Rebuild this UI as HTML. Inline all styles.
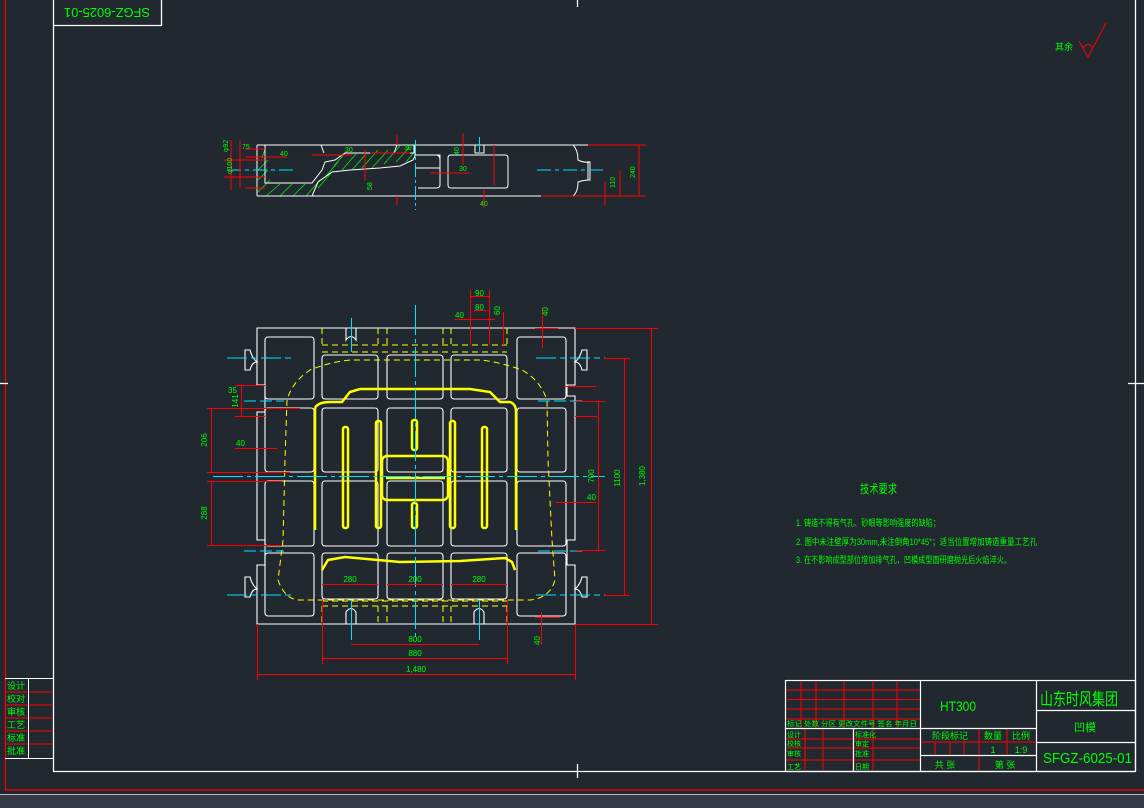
<!DOCTYPE html>
<html><head><meta charset="utf-8"><style>
html,body{margin:0;padding:0;background:#212830;width:1144px;height:808px;overflow:hidden}
svg{display:block}
text{font-family:"Liberation Sans","Noto Sans CJK SC",sans-serif;fill:#00ff00}
</style></head><body>
<svg width="1144" height="808" viewBox="0 0 1144 808" xmlns="http://www.w3.org/2000/svg">
<rect width="1144" height="808" fill="#212830"/>
<rect x="0" y="794" width="1144" height="14" fill="#353a46"/>
<line x1="0" y1="794.5" x2="1144" y2="794.5" stroke="#b8bcc4" stroke-width="1"/>
<line x1="5" y1="790" x2="1144" y2="790" stroke="#ff0000" stroke-width="1.2"/>
<line x1="5.5" y1="0" x2="5.5" y2="790" stroke="#ff0000" stroke-width="1.2"/>
<g stroke="#fff" stroke-width="1.3" fill="none">
<line x1="53.5" y1="0" x2="53.5" y2="771"/>
<line x1="53" y1="771.5" x2="1135" y2="771.5"/>
<line x1="1135.5" y1="0" x2="1135.5" y2="771"/>
<polyline points="53.5,25.5 161.5,25.5 161.5,0"/>
<line x1="577.5" y1="0" x2="577.5" y2="7"/>
<line x1="0" y1="383.5" x2="8" y2="383.5"/>
<line x1="1128" y1="383.5" x2="1144" y2="383.5"/>
<line x1="577.5" y1="764" x2="577.5" y2="778"/>
</g>
<text x="107" y="16" font-size="13" text-anchor="middle" textLength="86" lengthAdjust="spacingAndGlyphs" transform="rotate(180 107 12)">SFGZ-6025-01</text>
<text x="1055" y="50" font-size="9">其余</text>
<path d="M1079,41 L1088,57 L1106,23 M1083,48 Q1088,41 1093,48" stroke="#ff0000" stroke-width="1" fill="none"/>
<g stroke="#ff0000" stroke-width="1" fill="none">
<line x1="5" y1="692" x2="53" y2="692"/><line x1="5" y1="705" x2="53" y2="705"/>
<line x1="5" y1="718" x2="53" y2="718"/><line x1="5" y1="731" x2="53" y2="731"/>
<line x1="5" y1="744" x2="53" y2="744"/>
</g>
<g stroke="#fff" stroke-width="1" fill="none">
<line x1="5" y1="678.5" x2="53" y2="678.5"/><line x1="5" y1="758.5" x2="53" y2="758.5"/>
<line x1="28.5" y1="678" x2="28.5" y2="758"/>
</g>
<g font-size="9"><text x="7" y="689">设计</text><text x="7" y="702">校对</text><text x="7" y="715">审核</text><text x="7" y="728">工艺</text><text x="7" y="741">标准</text><text x="7" y="754">批准</text></g>
<g stroke="#ff0000" stroke-width="1" fill="none">
<line x1="786" y1="690" x2="920" y2="690"/><line x1="786" y1="699.5" x2="920" y2="699.5"/>
<line x1="786" y1="709" x2="920" y2="709"/><line x1="786" y1="719" x2="920" y2="719"/>
<line x1="801" y1="680" x2="801" y2="728"/><line x1="816" y1="680" x2="816" y2="728"/>
<line x1="844" y1="680" x2="844" y2="728"/><line x1="873" y1="680" x2="873" y2="728"/>
<line x1="897" y1="680" x2="897" y2="728"/>
<line x1="786" y1="739" x2="920" y2="739"/><line x1="786" y1="748" x2="920" y2="748"/>
<line x1="786" y1="760" x2="920" y2="760"/>
<line x1="805" y1="728" x2="805" y2="771"/><line x1="823" y1="728" x2="823" y2="771"/>
<line x1="853" y1="728" x2="853" y2="771"/><line x1="873" y1="728" x2="873" y2="771"/>
<line x1="920" y1="742" x2="1036" y2="742"/>
<line x1="979" y1="728" x2="979" y2="771"/><line x1="1007" y1="728" x2="1007" y2="755"/>
<line x1="935" y1="742" x2="935" y2="755"/><line x1="950" y1="742" x2="950" y2="755"/><line x1="964" y1="742" x2="964" y2="755"/>
</g>
<g stroke="#fff" stroke-width="1.2" fill="none">
<rect x="785.5" y="680.5" width="350" height="91"/>
<line x1="785" y1="728.5" x2="1036" y2="728.5"/>
<line x1="853.5" y1="728" x2="853.5" y2="771"/>
<line x1="920.5" y1="680" x2="920.5" y2="771"/>
<line x1="1036.5" y1="680" x2="1036.5" y2="771"/>
<line x1="920" y1="755.5" x2="1036" y2="755.5"/>
<line x1="1036" y1="710.5" x2="1135" y2="710.5"/>
<line x1="1036" y1="742.5" x2="1135" y2="742.5"/>
</g>
<g font-size="7"><text x="787" y="726" textLength="130" lengthAdjust="spacingAndGlyphs">标记 处数 分区 更改文件号 签名 年月日</text>
<text x="787" y="737">设计</text><text x="787" y="746">校核</text><text x="787" y="756">审核</text><text x="787" y="769">工艺</text>
<text x="855" y="737">标准化</text><text x="855" y="746">审定</text><text x="855" y="756">批准</text><text x="855" y="769">日期</text></g>
<text x="940" y="711" font-size="14" textLength="36" lengthAdjust="spacingAndGlyphs">HT300</text>
<text x="1040" y="705" font-size="17" textLength="78" lengthAdjust="spacingAndGlyphs">山东时风集团</text>
<text x="1085" y="731" font-size="11" text-anchor="middle">凹模</text>
<g font-size="9"><text x="950" y="739" text-anchor="middle">阶段标记</text><text x="993" y="739" text-anchor="middle">数量</text><text x="1021" y="739" text-anchor="middle">比例</text>
<text x="993" y="753" text-anchor="middle">1</text><text x="1021" y="753" text-anchor="middle">1:9</text>
<text x="945" y="768" text-anchor="middle">共 张</text><text x="1005" y="768" text-anchor="middle">第 张</text></g>
<text x="1043" y="763" font-size="15" textLength="89" lengthAdjust="spacingAndGlyphs">SFGZ-6025-01</text>
<text x="860" y="493" font-size="12" textLength="37" lengthAdjust="spacingAndGlyphs">技术要求</text>
<g font-size="9"><text x="796" y="526" textLength="144" lengthAdjust="spacingAndGlyphs">1. 铸造不得有气孔、砂眼等影响强度的缺陷；</text>
<text x="796" y="545" textLength="241" lengthAdjust="spacingAndGlyphs">2. 图中未注壁厚为30mm,未注倒角10*45°；适当位置增加铸造重量工艺孔</text>
<text x="796" y="563" textLength="215" lengthAdjust="spacingAndGlyphs">3. 在不影响成型部位增加排气孔，凹模成型面研磨抛光后火焰淬火。</text></g>

<g>
<g stroke="#00ee00" stroke-width="0.8">
<line x1="258" y1="170" x2="268" y2="160"/><line x1="258" y1="180" x2="268" y2="170"/><line x1="258" y1="192" x2="270" y2="180"/>
<line x1="266" y1="196" x2="280" y2="184"/><line x1="280" y1="196" x2="292" y2="184"/><line x1="293" y1="196" x2="305" y2="184"/>
<line x1="306" y1="196" x2="320" y2="180"/><line x1="318" y1="188" x2="332" y2="172"/><line x1="326" y1="176" x2="338" y2="162"/>
<line x1="334" y1="166" x2="346" y2="152"/><line x1="342" y1="170" x2="356" y2="154"/><line x1="352" y1="170" x2="366" y2="154"/>
<line x1="362" y1="168" x2="378" y2="150"/><line x1="372" y1="168" x2="388" y2="150"/><line x1="384" y1="164" x2="400" y2="146"/>
<line x1="396" y1="162" x2="410" y2="147"/><line x1="406" y1="162" x2="416" y2="150"/><line x1="262" y1="158" x2="265" y2="149"/>
</g>
<g stroke="#fff" stroke-width="1" fill="none">
<path d="M257,145 L588,145 M257,196 L588,196"/>
<path d="M257,145 L257,196"/>
<path d="M265,145 L265,183 L312,183 L322,170 L325,162 L335,160 L345,153 L394,153 L397,145"/>
<path d="M394,153 L414,153 L414,145 M321,145 L324,153"/>
<path d="M312,196 L318,182 L332,172 L350,170 L380,168 L400,166 L413,160 L415,156 L415,145"/>
<path d="M415,168 L440,168 L440,155 L415,155"/>
<path d="M417,155 L436,155 Q440,155 440,160 L440,185 Q440,188 436,188 L418,188"/>
<path d="M451,155 L505,155 Q508,155 508,158 L508,185 Q508,188 505,188 L451,188 Q448,188 448,185 L448,158 Q448,155 451,155 Z"/>
<path d="M475,145 L475,153 L484,153 L484,145"/>
<path d="M573,145 Q578,150 578,160 Q584,163 590,162 L590,180 Q584,180 578,182 Q578,192 573,196"/>
<path d="M588,161 L588,180"/>
</g>
<g stroke="#00e5ff" stroke-width="1" fill="none">
<line x1="415.5" y1="140" x2="415.5" y2="210" stroke-dasharray="14 3 3 3"/>
<line x1="227" y1="170" x2="295" y2="170" stroke-dasharray="14 4 4 4"/>
<line x1="537" y1="170" x2="605" y2="170" stroke-dasharray="14 4 4 4"/>
<line x1="479.5" y1="137" x2="479.5" y2="152"/>
</g>
<g stroke="#ff0000" stroke-width="1" fill="none">
<line x1="588" y1="145" x2="646" y2="145"/><line x1="588" y1="196" x2="646" y2="196"/>
<line x1="639" y1="145" x2="639" y2="196"/>
<line x1="620" y1="171" x2="620" y2="196"/><line x1="605" y1="182" x2="605" y2="205"/>
<line x1="224" y1="160" x2="265" y2="160"/><line x1="224" y1="177" x2="265" y2="177"/>
<line x1="231" y1="140" x2="231" y2="190"/><line x1="240" y1="140" x2="240" y2="188"/>
<line x1="245" y1="149" x2="265" y2="149"/><line x1="245" y1="188" x2="265" y2="188"/>
<line x1="245" y1="157" x2="287" y2="157"/><line x1="312" y1="155" x2="352" y2="155"/>
<line x1="370" y1="153" x2="410" y2="153"/>
<line x1="430" y1="173" x2="470" y2="173"/>
<line x1="463" y1="133" x2="463" y2="165"/><line x1="494" y1="145" x2="494" y2="185"/>
<line x1="484" y1="190" x2="484" y2="208"/>
<line x1="397" y1="135" x2="397" y2="145"/><line x1="397" y1="196" x2="397" y2="205"/>
<line x1="365" y1="150" x2="365" y2="180"/>
<line x1="541" y1="196" x2="600" y2="196"/>
</g>
<g font-size="7">
<text x="280" y="156">40</text><text x="345" y="152">30</text><text x="404" y="150">30</text>
<text x="459" y="171">30</text><text x="480" y="206">40</text><text x="242" y="149">75</text>
<text x="232" y="174" transform="rotate(-90 232 174)">φ100</text><text x="228" y="152" transform="rotate(-90 228 152)">φ92</text>
<text x="635" y="178" transform="rotate(-90 635 178)">240</text><text x="615" y="188" transform="rotate(-90 615 188)">110</text>
<text x="459" y="155" transform="rotate(-90 459 155)">40</text><text x="372" y="190" transform="rotate(-90 372 190)">58</text>
</g>
</g>

<g stroke="#fff" stroke-width="1.1" fill="none">
<path d="M257,328 L575,328 L575,385 L567,385 L567,396 L575,396 L575,540 L567,540 L567,565 L575,565 L575,624 L257,624 L257,565 L265,565 L265,540 L257,540 L257,412 L265,412 L265,385 L257,385 Z"/>
<path d="M245,350 L245,370 L250,370 Q252,362 257,362 Q252,358 250,350 Z"/>
<path d="M245,577 L245,597 L250,597 Q252,589 257,589 Q252,585 250,577 Z"/>
<path d="M587,350 L587,370 L582,370 Q580,362 575,362 Q580,358 582,350 Z"/>
<path d="M587,577 L587,597 L582,597 Q580,589 575,589 Q580,585 582,577 Z"/>
<rect x="265" y="337" width="49" height="62" rx="3"/>
<rect x="265" y="408" width="49" height="64" rx="3"/>
<rect x="265" y="481" width="49" height="65" rx="3"/>
<rect x="265" y="553" width="49" height="63" rx="3"/>
<rect x="517" y="337" width="49" height="62" rx="3"/>
<rect x="517" y="408" width="49" height="64" rx="3"/>
<rect x="517" y="481" width="49" height="65" rx="3"/>
<rect x="517" y="553" width="49" height="63" rx="3"/>
<rect x="322" y="355" width="56" height="44" rx="3"/><rect x="387" y="355" width="56" height="44" rx="3"/><rect x="451" y="355" width="56" height="44" rx="3"/>
<rect x="322" y="408" width="56" height="64" rx="3"/><rect x="387" y="408" width="56" height="64" rx="3"/><rect x="451" y="408" width="56" height="64" rx="3"/>
<rect x="322" y="481" width="56" height="65" rx="3"/><rect x="387" y="481" width="56" height="65" rx="3"/><rect x="451" y="481" width="56" height="65" rx="3"/>
<rect x="322" y="553" width="56" height="46" rx="3"/><rect x="387" y="553" width="56" height="46" rx="3"/><rect x="451" y="553" width="56" height="46" rx="3"/>
<path d="M346,328 L346,340 Q351,333 356,340 L356,328"/>
<path d="M474,624 L474,612 Q479,605 484,612 L484,624"/>
<path d="M346,624 L346,612 Q351,605 356,612 L356,624"/>
</g>
<g stroke="#ffff00" stroke-width="1" fill="none" stroke-dasharray="6 4">
<path d="M322,345 L507,345 M322,352 L507,352 M322,606 L507,606 M322,601 L507,601"/>
<path d="M322,328 L322,345 M378,328 L378,345 M387,328 L387,345 M443,328 L443,345 M451,328 L451,345 M507,328 L507,345"/>
<path d="M322,606 L322,624 M378,606 L378,624 M387,606 L387,624 M443,606 L443,624 M451,606 L451,624 M507,606 L507,624"/>
<path d="M350,360 Q330,362 310,370 Q292,382 287,400 L285,460 L283,540 L278,580 Q285,600 300,600 L530,600 Q550,598 555,580 L552,540 L548,460 L547,400 Q540,380 522,370 Q500,362 480,360 Z"/>
</g>
<g stroke="#ffff00" stroke-width="2.5" fill="none">
<path d="M315,408 Q318,402 330,402 L342,402 L350,392 L360,389 L470,389 L490,392 L500,402 L510,402 Q516,404 516,412 L516,530"/>
<path d="M315,408 L315,530"/>
<path d="M322,570 L328,560 L345,557 L400,562 L460,561 L505,558 L512,562 L515,570"/>
<rect x="343" y="427" width="5" height="101" rx="2"/>
<rect x="376" y="421" width="5" height="107" rx="2"/>
<rect x="412" y="420" width="5" height="30" rx="2"/>
<rect x="412" y="503" width="5" height="25" rx="2"/>
<rect x="450" y="421" width="5" height="107" rx="2"/>
<rect x="482" y="427" width="5" height="101" rx="2"/>
<rect x="382" y="456" width="66" height="44" rx="5"/>
<line x1="386" y1="478" x2="445" y2="478"/>
</g>
<g stroke="#00e5ff" stroke-width="1" fill="none">
<line x1="213" y1="476.5" x2="605" y2="476.5" stroke-dasharray="30 4 4 4"/>
<line x1="415.5" y1="305" x2="415.5" y2="640" stroke-dasharray="30 4 4 4"/>
<line x1="227" y1="358" x2="294" y2="358" stroke-dasharray="20 4 6 4"/>
<line x1="227" y1="595" x2="294" y2="595" stroke-dasharray="20 4 6 4"/>
<line x1="536" y1="358" x2="605" y2="358" stroke-dasharray="20 4 6 4"/>
<line x1="536" y1="595" x2="605" y2="595" stroke-dasharray="20 4 6 4"/>
<line x1="244" y1="401" x2="284" y2="401" stroke-dasharray="12 4"/>
<line x1="244" y1="551" x2="284" y2="551" stroke-dasharray="12 4"/>
<line x1="538" y1="401" x2="586" y2="401" stroke-dasharray="12 4"/>
<line x1="538" y1="551" x2="586" y2="551" stroke-dasharray="12 4"/>
<line x1="351.5" y1="318" x2="351.5" y2="352"/><line x1="479.5" y1="600" x2="479.5" y2="640"/>
<line x1="351.5" y1="600" x2="351.5" y2="640"/>
</g>
<g stroke="#ff0000" stroke-width="1" fill="none">
<line x1="257.5" y1="624" x2="257.5" y2="680"/><line x1="575.5" y1="624" x2="575.5" y2="680"/>
<line x1="257" y1="674.5" x2="575" y2="674.5"/>
<line x1="322.5" y1="600" x2="322.5" y2="664"/><line x1="507.5" y1="600" x2="507.5" y2="664"/>
<line x1="322" y1="658.5" x2="507" y2="658.5"/>
<line x1="351" y1="644.5" x2="479" y2="644.5"/>
<line x1="322" y1="584.5" x2="378" y2="584.5"/><line x1="387" y1="584.5" x2="443" y2="584.5"/><line x1="451" y1="584.5" x2="507" y2="584.5"/>
<line x1="575" y1="328.5" x2="658" y2="328.5"/><line x1="575" y1="624.5" x2="658" y2="624.5"/>
<line x1="651.5" y1="328" x2="651.5" y2="624"/>
<line x1="604" y1="358.5" x2="630" y2="358.5"/><line x1="604" y1="595.5" x2="630" y2="595.5"/>
<line x1="624.5" y1="358" x2="624.5" y2="595"/>
<line x1="575" y1="401.5" x2="605" y2="401.5"/><line x1="575" y1="550.5" x2="605" y2="550.5"/>
<line x1="598.5" y1="401" x2="598.5" y2="550"/>
<line x1="207" y1="408.5" x2="300" y2="408.5"/><line x1="207" y1="472.5" x2="290" y2="472.5"/>
<line x1="207" y1="481.5" x2="282" y2="481.5"/><line x1="207" y1="545.5" x2="282" y2="545.5"/>
<line x1="211.5" y1="408" x2="211.5" y2="472"/><line x1="211.5" y1="481" x2="211.5" y2="545"/>
<line x1="235" y1="385.5" x2="265" y2="385.5"/><line x1="235" y1="416.5" x2="265" y2="416.5"/>
<line x1="241.5" y1="385" x2="241.5" y2="416"/>
<line x1="235" y1="448.5" x2="277" y2="448.5"/>
<line x1="556" y1="502.5" x2="596" y2="502.5"/>
<line x1="470.5" y1="290" x2="470.5" y2="345"/><line x1="489.5" y1="290" x2="489.5" y2="345"/>
<line x1="470" y1="296.5" x2="489" y2="296.5"/><line x1="474" y1="310.5" x2="487" y2="310.5"/>
<line x1="455" y1="319.5" x2="495" y2="319.5"/>
<line x1="503.5" y1="312" x2="503.5" y2="345"/>
<line x1="542.5" y1="308" x2="542.5" y2="348"/><line x1="535" y1="328.5" x2="558" y2="328.5"/>
<line x1="541.5" y1="612" x2="541.5" y2="645"/><line x1="535" y1="617.5" x2="560" y2="617.5"/>
<line x1="564" y1="386.5" x2="596" y2="386.5"/><line x1="575" y1="416.5" x2="597" y2="416.5"/>
</g>
<g font-size="8">
<text x="416" y="672" text-anchor="middle">1,480</text>
<text x="415" y="656" text-anchor="middle">880</text>
<text x="415" y="642" text-anchor="middle">800</text>
<text x="350" y="582" text-anchor="middle">280</text><text x="415" y="582" text-anchor="middle">200</text><text x="479" y="582" text-anchor="middle">280</text>
<text x="645" y="476" text-anchor="middle" transform="rotate(-90 645 476)">1,380</text>
<text x="620" y="478" text-anchor="middle" transform="rotate(-90 620 478)">1100</text>
<text x="594" y="476" text-anchor="middle" transform="rotate(-90 594 476)">700</text>
<text x="207" y="440" text-anchor="middle" transform="rotate(-90 207 440)">206</text>
<text x="207" y="513" text-anchor="middle" transform="rotate(-90 207 513)">288</text>
<text x="238" y="401" text-anchor="middle" transform="rotate(-90 238 401)">141</text>
<text x="228" y="393">35</text><text x="236" y="446">40</text><text x="587" y="500">40</text>
<text x="475" y="296">90</text><text x="475" y="310">80</text><text x="455" y="318">40</text>
<text x="500" y="315" transform="rotate(-90 500 315)">60</text><text x="548" y="316" transform="rotate(-90 548 316)">40</text>
<text x="540" y="645" transform="rotate(-90 540 645)">40</text>
</g>
</svg>
</body></html>
